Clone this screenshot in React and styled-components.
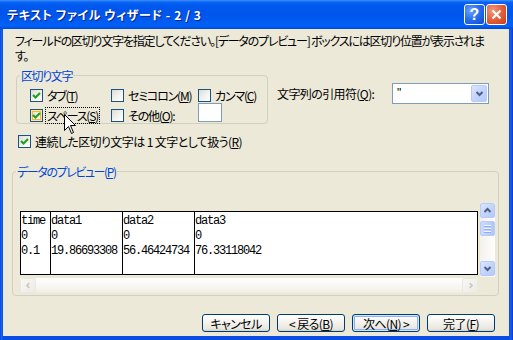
import styled, { createGlobalStyle } from "styled-components"

const GlobalStyle = createGlobalStyle`
  html, body {
    margin: 0;
    padding: 0;
    background: #ece9d8;
  }
  body {
    font-family: "Noto Sans CJK JP", "Noto Sans", sans-serif;
    font-size: 12px;
    letter-spacing: -0.6px;
    font-feature-settings: "palt" 1;
  }
`

const Window = styled.div`
  position: relative;
  width: 513px;
  height: 340px;
  display: flex;
  flex-direction: column;
  background: #0a4de4;
  overflow: hidden;
`

const TitleBar = styled.div`
  height: 29px;
  flex: none;
  display: flex;
  align-items: center;
  padding: 0 6px 0 7px;
  box-sizing: border-box;
  background: linear-gradient(#3d95ff 0, #0a64f5 2px, #0058ee 6px, #0055ea 14px, #005cf2 22px, #0062f7 26px, #0046d8 29px);
`

const Title = styled.div`
  color: #fff;
  font-weight: bold;
  font-size: 12px;
  letter-spacing: 0.6px;
  text-shadow: 1px 1px 0 #0b2387;
  white-space: nowrap;
`

const TitleButtons = styled.div`
  margin-left: auto;
  display: flex;
  gap: 1px;
`

const CaptionButton = styled.div`
  width: 21px;
  height: 21px;
  box-sizing: border-box;
  border: 1px solid #fff;
  border-radius: 3px;
  display: flex;
  align-items: center;
  justify-content: center;
  color: #fff;
  font-family: "Liberation Sans", Arial, sans-serif;
  font-weight: bold;
  font-size: 16px;
  letter-spacing: 0;
  background: ${p => p.$close
    ? "radial-gradient(circle at 30% 30%, #f29a7e 0%, #e5653f 45%, #cd3a12 100%)"
    : "radial-gradient(circle at 30% 30%, #6fa3ff 0%, #2a6ff0 45%, #1248cf 100%)"};
`

const Frame = styled.div`
  flex: 1;
  display: flex;
  padding: 0 4px 4px 3px;
  background: linear-gradient(90deg, #0831d9 0, #166aee 1px, #0a4de4 3px, #0a4de4 calc(100% - 4px), #1a5fe8 calc(100% - 2px), #0831d9 100%);
  min-height: 0;
`

const Body = styled.div`
  flex: 1;
  min-width: 0;
  min-height: 0;
  overflow: hidden;
  display: flex;
  flex-direction: column;
  background: #ece9d8;
  padding: 4px 14px 4px 9px;
  color: #000;
`

const Instructions = styled.div`
  margin-left: 3px;
  line-height: 15px;
  letter-spacing: -1.2px;
  white-space: nowrap;
`

const UpperRow = styled.div`
  display: flex;
  align-items: flex-start;
  margin: 5px 0 0 4px;
`

const GroupBox = styled.fieldset`
  margin: 0;
  min-inline-size: 0;
  width: ${p => p.$width}px;
  box-sizing: border-box;
  border: 1px solid #d0d0bf;
  border-radius: 4px;
  padding: ${p => p.$padding};
`

const Legend = styled.legend`
  padding: 0 1px;
  line-height: 15px;
  letter-spacing: -1.4px;
  color: #0046d5;
`

const OptionGrid = styled.div`
  display: grid;
  grid-template-columns: 81px 87px 1fr;
  grid-auto-rows: 15px;
  row-gap: 5px;
  margin-left: 10px;
  letter-spacing: -1.2px;
`

const Option = styled.label`
  display: flex;
  align-items: center;
  line-height: 15px;
  white-space: nowrap;
`

const Box = styled.span`
  flex: none;
  width: 13px;
  height: 13px;
  box-sizing: border-box;
  border: 1px solid #1c5180;
  background: linear-gradient(135deg, #dcdcd7 0%, #f4f4f1 60%, #ffffff 100%);
  box-shadow: ${p => p.$hover ? "inset 0 0 0 1px #fde5a6, inset 0 0 0 2px #f8b33b" : "none"};
  display: flex;
  align-items: center;
  justify-content: center;
  margin-right: 3px;
`

const OptionText = styled.span`
  padding: 0 1px;
  outline: ${p => p.$focus ? "1px dotted #000" : "none"};
  outline-offset: 0;
`

const SmallInput = styled.div`
  width: 24px;
  height: 19px;
  box-sizing: border-box;
  border: 1px solid #7f9db9;
  background: #fff;
  align-self: start;
  margin-top: -5px;
`

const QuoteField = styled.div`
  display: flex;
  align-items: center;
  margin: 15px 0 0 9px;
`

const QuoteLabel = styled.span`
  width: 115px;
  line-height: 15px;
`

const Combo = styled.div`
  width: 97px;
  height: 21px;
  box-sizing: border-box;
  border: 1px solid #7f9db9;
  background: #fff;
  display: flex;
  align-items: stretch;
  padding: 1px;
`

const ComboValue = styled.span`
  flex: 1;
  padding-left: 3px;
  line-height: 16px;
  font-family: "Liberation Sans", Arial, sans-serif;
`

const ArrowButton = styled.span`
  flex: none;
  width: ${p => p.$w || 15}px;
  height: ${p => p.$h || 15}px;
  box-sizing: border-box;
  border-radius: 2px;
  display: flex;
  align-items: center;
  justify-content: center;
  border: 1px solid ${p => p.$disabled ? "#e9e8e1" : "#b7cbf6"};
  background: ${p => p.$disabled
    ? "linear-gradient(135deg, #f8f7f2, #ecebe4)"
    : "linear-gradient(135deg, #dbe6ff 0%, #c4d5fd 50%, #b4c8f8 100%)"};
`

const ConsecutiveRow = styled(Option)`
  margin: 10px 0 0 6px;
`

const PreviewGrid = styled.div`
  display: grid;
  grid-template-columns: 458px 2px 15px;
  grid-template-rows: 8px 64px 2px 1px 15px;
  margin-left: 4px;
`

const PreviewTable = styled.div`
  grid-column: 1;
  grid-row: 2;
  display: flex;
  border: 1px solid #000;
  background: #fff;
  font-family: "Liberation Mono", "Courier New", monospace;
  font-size: 12px;
  letter-spacing: -1.2px;
  line-height: 15px;
  font-feature-settings: normal;
  overflow: hidden;
`

const PreviewColumn = styled.div`
  flex: ${p => p.$width ? "none" : 1};
  width: ${p => p.$width ? `${p.$width}px` : "auto"};
  border-right: ${p => p.$width ? "1px solid #000" : "none"};
  padding-top: 2px;
  white-space: pre;
`

const VScroll = styled.div`
  grid-column: 3;
  grid-row: 1 / 4;
  display: flex;
  flex-direction: column;
  background: linear-gradient(90deg, #f3f1ec, #fefefe);
`

const Thumb = styled.span`
  margin-top: 3px;
  width: 15px;
  height: 15px;
  box-sizing: border-box;
  border: 1px solid #b7cbf6;
  border-radius: 2px;
  background: linear-gradient(90deg, #cbdafd 0%, #bccffb 60%, #b1c6f7 100%);
  display: flex;
  flex-direction: column;
  align-items: center;
  justify-content: center;
  gap: 1px;
`

const Grip = styled.span`
  width: 7px;
  height: 1px;
  background: #eef4fe;
  box-shadow: 0 1px 0 #8eaef0;
  margin-bottom: 1px;
`

const HScroll = styled.div`
  grid-column: 1;
  grid-row: 5;
  display: flex;
  justify-content: space-between;
  background: linear-gradient(#fefefe, #f7f6f1 60%, #eeede5);
`

const ButtonRow = styled.div`
  margin-top: auto;
  display: flex;
  justify-content: flex-end;
  gap: 7px;
`

const Button = styled.button`
  width: 68px;
  height: 18px;
  padding: 0;
  font-family: inherit;
  font-size: 12px;
  letter-spacing: -0.6px;
  line-height: 15px;
  font-feature-settings: "palt" 1;
  color: #000;
  border: 1px solid #003c74;
  border-radius: 3px;
  background: linear-gradient(#ffffff 0%, #f4f3ee 45%, #e9e7df 85%, #d8d2c2 100%);
  box-shadow: ${p => p.$default ? "inset 0 0 0 1px #cee7ff, inset 0 0 0 2px #91b0ea" : "none"};
`

const Cursor = styled.svg`
  position: absolute;
  left: 64px;
  top: 114px;
`

const Check = () => (
  <svg width="9" height="9" viewBox="0 0 9 9">
    <polyline points="1,4 3.5,6.5 8,2" fill="none" stroke="#21a121" strokeWidth="2.2" />
  </svg>
)

const Chevron = ({ dir = "down", color = "#4d6185" }) => {
  const pts = {
    down: "1.5,2 4.5,5 7.5,2",
    up: "1.5,5 4.5,2 7.5,5",
    left: "5,1.5 2,4.5 5,7.5",
    right: "3,1.5 6,4.5 3,7.5",
  }[dir]
  return (
    <svg width="9" height="7" viewBox={dir === "left" || dir === "right" ? "0 0 8 9" : "0 0 9 7"}>
      <polyline points={pts} fill="none" stroke={color} strokeWidth="2" />
    </svg>
  )
}

const CheckOption = ({ checked, hover, focus, children }) => (
  <Option>
    <Box $hover={hover}>{checked && <Check />}</Box>
    <OptionText $focus={focus}>{children}</OptionText>
  </Option>
)

const previewData = [
  { width: 29, lines: ["time", "0", "0.1"] },
  { width: 71, lines: ["data1", "0", "19.86693308"] },
  { width: 71, lines: ["data2", "0", "56.46424734"] },
  { lines: ["data3", "0", "76.33118042"] },
]

export default function App() {
  return (
    <>
      <GlobalStyle />
      <Window>
        <TitleBar>
          <Title>テキスト ファイル ウィザード - 2 / 3</Title>
          <TitleButtons>
            <CaptionButton>?</CaptionButton>
            <CaptionButton $close>
              <svg width="11" height="11" viewBox="0 0 11 11">
                <path d="M1.5 1.5 L9.5 9.5 M9.5 1.5 L1.5 9.5" stroke="#fff" strokeWidth="2.2" />
              </svg>
            </CaptionButton>
          </TitleButtons>
        </TitleBar>
        <Frame>
          <Body>
            <Instructions>
              フィールドの区切り文字を指定してください。[データのプレビュー] ボックスには区切り位置が表示されま
              <br />
              す。
            </Instructions>

            <UpperRow>
              <GroupBox $width={252} $padding="5px 0 0 3px">
                <Legend>区切り文字</Legend>
                <OptionGrid>
                  <CheckOption checked>タブ(<u>T</u>)</CheckOption>
                  <CheckOption>セミコロン(<u>M</u>)</CheckOption>
                  <CheckOption>カンマ(<u>C</u>)</CheckOption>
                  <CheckOption checked hover focus>スペース(<u>S</u>)</CheckOption>
                  <CheckOption>その他(<u>O</u>):</CheckOption>
                  <SmallInput />
                </OptionGrid>
              </GroupBox>
              <QuoteField>
                <QuoteLabel>文字列の引用符(<u>Q</u>):</QuoteLabel>
                <Combo>
                  <ComboValue>"</ComboValue>
                  <ArrowButton $w={16} $h={17}><Chevron dir="down" /></ArrowButton>
                </Combo>
              </QuoteField>
            </UpperRow>

            <ConsecutiveRow>
              <Box><Check /></Box>
              <OptionText>連続した区切り文字は 1 文字として扱う(<u>R</u>)</OptionText>
            </ConsecutiveRow>

            <GroupBox $width={487} $padding="24px 0 2px 3px" style={{ marginTop: 15 }}>
              <Legend>データのプレビュー(<u>P</u>)</Legend>
              <PreviewGrid>
                <PreviewTable>
                  {previewData.map((col, i) => (
                    <PreviewColumn key={i} $width={col.width}>
                      {col.lines.join("\n")}
                    </PreviewColumn>
                  ))}
                </PreviewTable>
                <VScroll>
                  <ArrowButton><Chevron dir="up" /></ArrowButton>
                  <Thumb><Grip /><Grip /><Grip /></Thumb>
                  <ArrowButton style={{ marginTop: "auto", marginBottom: 1 }}><Chevron dir="down" /></ArrowButton>
                </VScroll>
                <HScroll>
                  <ArrowButton $w={16} $disabled><Chevron dir="left" color="#c9c8bc" /></ArrowButton>
                  <ArrowButton $w={16} $disabled><Chevron dir="right" color="#c9c8bc" /></ArrowButton>
                </HScroll>
              </PreviewGrid>
            </GroupBox>

            <ButtonRow>
              <Button>キャンセル</Button>
              <Button>&lt; 戻る(<u>B</u>)</Button>
              <Button $default>次へ(<u>N</u>) &gt;</Button>
              <Button>完了(<u>F</u>)</Button>
            </ButtonRow>
          </Body>
        </Frame>
        <Cursor width="13" height="21" viewBox="0 0 13 21">
          <path d="M0.5 0.5 V16.5 L4.5 12.5 L7.5 19.5 L9.5 18.5 L6.5 11.5 H11.5 Z" fill="#fff" stroke="#000" strokeWidth="1" />
        </Cursor>
      </Window>
    </>
  )
}
